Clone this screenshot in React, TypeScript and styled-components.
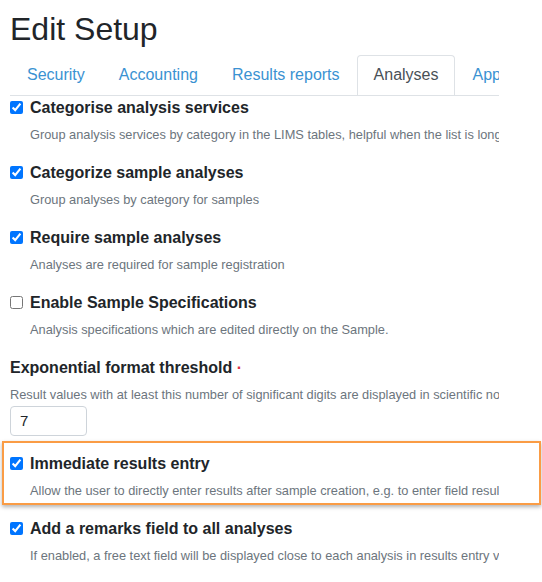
import React from "react";
import styled, { createGlobalStyle } from "styled-components";

const GlobalStyle = createGlobalStyle`
  body {
    margin: 0;
    background: #fff;
    font-family: "Liberation Sans", Arial, sans-serif;
    color: #212529;
  }
`;

const tabs = ["Security", "Accounting", "Results reports", "Analyses", "Appearance"];

type Option = {
  label: string;
  help: string;
  checked: boolean;
};

const topOptions: Option[] = [
  {
    label: "Categorise analysis services",
    help: "Group analysis services by category in the LIMS tables, helpful when the list is long",
    checked: true,
  },
  {
    label: "Categorize sample analyses",
    help: "Group analyses by category for samples",
    checked: true,
  },
  {
    label: "Require sample analyses",
    help: "Analyses are required for sample registration",
    checked: true,
  },
  {
    label: "Enable Sample Specifications",
    help: "Analysis specifications which are edited directly on the Sample.",
    checked: false,
  },
];

const App: React.FC = () => {
  return (
    <Page>
      <GlobalStyle />
      <Title>Edit Setup</Title>
      <TabList>
        {tabs.map((t) => (
          <Tab key={t} active={t === "Analyses"}>
            {t}
          </Tab>
        ))}
      </TabList>

      {topOptions.map((o) => (
        <CheckItem key={o.label} {...o} />
      ))}

      <Field flush>
        <FieldLabel>
          Exponential format threshold <Required>·</Required>
        </FieldLabel>
        <Help indent={false}>
          Result values with at least this number of significant digits are displayed in scientific notation
        </Help>
        <NumberInput type="text" defaultValue="7" />
      </Field>

      <Highlight>
        <CheckItem
          label="Immediate results entry"
          help="Allow the user to directly enter results after sample creation, e.g. to enter field results immediately"
          checked
          flush
        />
      </Highlight>

      <CheckItem
        label="Add a remarks field to all analyses"
        help="If enabled, a free text field will be displayed close to each analysis in results entry view"
        checked
      />
    </Page>
  );
};

const CheckItem: React.FC<Option & { flush?: boolean }> = ({ label, help, checked, flush }) => (
  <Field flush={flush}>
    <CheckRow>
      <Check type="checkbox" defaultChecked={checked} />
      <CheckLabel>{label}</CheckLabel>
    </CheckRow>
    <Help indent>{help}</Help>
  </Field>
);

export default App;

const Page = styled.div`
  padding: 10px 0 0 10px;
`;

const Title = styled.h1`
  margin: 0 0 7px;
  font-size: 32px;
  font-weight: 400;
  line-height: 1.2;
  color: #212529;
`;

const TabList = styled.div`
  display: flex;
  width: 489px;
  overflow: hidden;
  border-bottom: 1px solid #dee2e6;
  white-space: nowrap;
`;

const Tab = styled.div<{ active: boolean }>`
  flex-shrink: 0;
  padding: 8px 16px;
  margin-bottom: -1px;
  font-size: 16px;
  line-height: 22.5px;
  border: 1px solid ${(p) => (p.active ? "#dee2e6" : "transparent")};
  border-bottom-color: ${(p) => (p.active ? "#fff" : "transparent")};
  border-radius: 4px 4px 0 0;
  background: ${(p) => (p.active ? "#fff" : "transparent")};
  color: ${(p) => (p.active ? "#495057" : "#3a92d2")};
`;

const Field = styled.div<{ flush?: boolean }>`
  width: 489px;
  overflow: hidden;
  white-space: nowrap;
  margin-bottom: ${(p) => (p.flush ? "0" : "16px")};
`;

const CheckRow = styled.div`
  display: flex;
  align-items: center;
  gap: 7px;
  height: 24px;
`;

const Check = styled.input`
  width: 13px;
  height: 13px;
  margin: 0;
  flex-shrink: 0;
`;

const CheckLabel = styled.label`
  font-size: 16px;
  font-weight: 700;
  line-height: 24px;
  color: #212529;
`;

const FieldLabel = styled.div`
  font-size: 16px;
  font-weight: 700;
  line-height: 24px;
  color: #212529;
`;

const Required = styled.span`
  color: #dc3545;
  font-weight: 700;
`;

const Help = styled.div<{ indent: boolean }>`
  margin-top: 5px;
  padding-left: ${(p) => (p.indent ? "20px" : "0")};
  font-size: 12.8px;
  line-height: 20px;
  color: #6c757d;
`;

const NumberInput = styled.input`
  display: block;
  box-sizing: border-box;
  margin-top: 1px;
  width: 77px;
  height: 30px;
  padding: 4px 9px;
  font-family: "Liberation Sans", Arial, sans-serif;
  font-size: 15px;
  color: #212529;
  border: 1px solid #ced4da;
  border-radius: 4px;
  outline: none;
`;

const Highlight = styled.div`
  box-sizing: border-box;
  width: 539px;
  margin: 5px 0 12px -8px;
  padding: 9px 0 2px 6px;
  border: 2px solid #fa9c45;
  box-shadow: 0 2px 4px rgba(0, 0, 0, 0.3);
`;
